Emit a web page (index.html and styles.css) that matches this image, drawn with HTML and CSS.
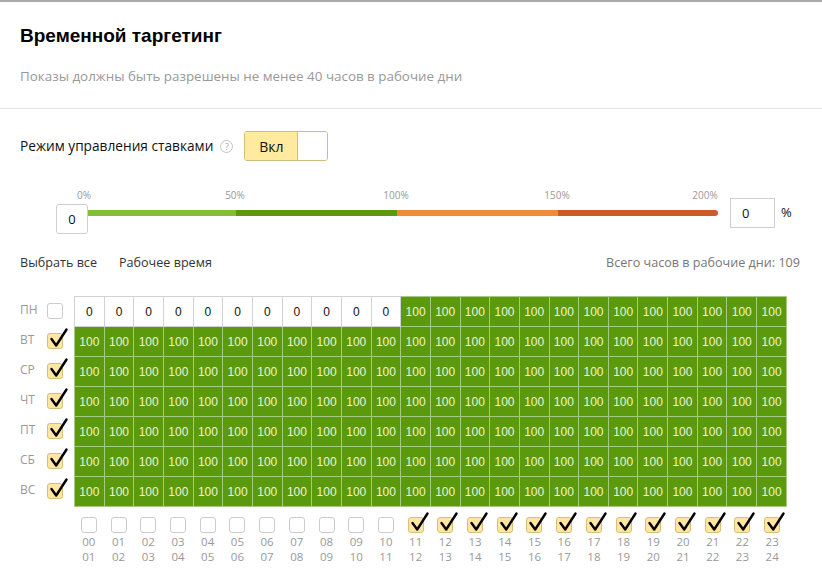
FILE: index.html
```html
<!DOCTYPE html>
<html lang="ru">
<head>
<meta charset="utf-8">
<title>Временной таргетинг</title>
<link rel="stylesheet" href="styles.css">
</head>
<body>
<svg width="0" height="0" class="defs" aria-hidden="true">
  <symbol id="chk" viewBox="0 0 22 22">
    <path d="M4.5 12 L9.2 18.5 L19.5 2.5" fill="none" stroke="#000" stroke-width="2.4" stroke-linecap="round" stroke-linejoin="round"/>
  </symbol>
</svg>
<div class="topbar"></div>
<header class="header">
  <h1 class="title">Временной таргетинг</h1>
  <p class="subtitle">Показы должны быть разрешены не менее 40 часов в рабочие дни</p>
</header>
<div class="divider"></div>
<section class="content">
  <div class="mode-row">
    <span class="mode-label">Режим управления ставками</span>
    <span class="help">?</span>
    <div class="toggle"><span class="toggle-on">Вкл</span><span class="toggle-off"></span></div>
  </div>

  <div class="slider-row">
    <div class="inp inp-left">0</div>
    <div class="scale">
      <div class="ticks">
        <span class="tick" style="left:-4px">0%</span>
        <span class="tick" style="left:147px">50%</span>
        <span class="tick" style="left:308px">100%</span>
        <span class="tick" style="left:469px">150%</span>
        <span class="tick" style="left:617px">200%</span>
      </div>
      <div class="bar">
        <span class="seg seg1"></span><span class="seg seg2"></span><span class="seg seg3"></span><span class="seg seg4"></span>
      </div>
    </div>
    <div class="inp inp-right">0</div>
    <span class="pct">%</span>
  </div>

  <div class="links-row">
    <span class="link">Выбрать все</span>
    <span class="link">Рабочее время</span>
    <span class="total">Всего часов в рабочие дни: 109</span>
  </div>

  <div class="grid-wrap">
    <div class="days">
      <div class="day"><span class="dname">ПН</span><span class="cb"></span></div>
      <div class="day"><span class="dname">ВТ</span><span class="cb on"><svg class="mark"><use href="#chk"/></svg></span></div>
      <div class="day"><span class="dname">СР</span><span class="cb on"><svg class="mark"><use href="#chk"/></svg></span></div>
      <div class="day"><span class="dname">ЧТ</span><span class="cb on"><svg class="mark"><use href="#chk"/></svg></span></div>
      <div class="day"><span class="dname">ПТ</span><span class="cb on"><svg class="mark"><use href="#chk"/></svg></span></div>
      <div class="day"><span class="dname">СБ</span><span class="cb on"><svg class="mark"><use href="#chk"/></svg></span></div>
      <div class="day"><span class="dname">ВС</span><span class="cb on"><svg class="mark"><use href="#chk"/></svg></span></div>
    </div>
    <table class="hours">
      <tbody id="tbody"></tbody>
    </table>
  </div>

  <div class="hour-checks" id="hourchecks"></div>
</section>
<script src="script.js"></script>
</body>
</html>
```

FILE: script.js
```js
(function () {
  var tbody = document.getElementById('tbody');
  var html = '';
  for (var r = 0; r < 7; r++) {
    html += '<tr>';
    for (var c = 0; c < 24; c++) {
      if (r === 0 && c < 11) {
        html += '<td class="c0">0</td>';
      } else {
        html += '<td class="c100">100</td>';
      }
    }
    html += '</tr>';
  }
  tbody.innerHTML = html;

  var hc = document.getElementById('hourchecks');
  var h = '';
  function pad(n) { return (n < 10 ? '0' : '') + n; }
  for (var i = 0; i < 24; i++) {
    var on = i >= 11;
    h += '<div class="hc">' +
      '<span class="cb' + (on ? ' on' : '') + '">' + (on ? '<svg class="mark"><use href="#chk"/></svg>' : '') + '</span>' +
      '<span class="hl">' + pad(i) + '</span>' +
      '<span class="hl">' + pad(i + 1) + '</span>' +
      '</div>';
  }
  hc.innerHTML = h;
})();
```

FILE: styles.css
```css
* { box-sizing: border-box; }
html, body { margin: 0; padding: 0; background: #fff; }
body {
  width: 822px;
  font-family: "Open Sans", "Noto Sans", sans-serif;
  color: #000;
}
.defs { position: absolute; }
.topbar { height: 2px; background: #a9a9a9; }
.header { padding: 22px 20px 23px; }
.title {
  margin: 0;
  font-family: "Liberation Sans", Arial, sans-serif;
  font-weight: 700;
  font-size: 19px;
  line-height: 24px;
  color: #000;
}
.subtitle {
  margin: 19px 0 0;
  font-size: 13.4px;
  line-height: 18px;
  color: #999;
}
.divider { height: 1px; background: #e5e5e5; }
.content { padding: 0 20px; }

.mode-row {
  margin-top: 22px;
  height: 30px;
  display: flex;
  align-items: center;
}
.mode-label { font-size: 13.7px; line-height: 18px; color: #111; }
.help {
  margin-left: 7px;
  width: 13px; height: 13px;
  border: 1px solid #c4c4c4;
  border-radius: 50%;
  font-size: 9px; line-height: 11px;
  text-align: center;
  color: #aaa;
}
.toggle {
  margin-left: 11px;
  width: 84px; height: 30px;
  display: flex;
  border: 1px solid #cdbd83;
  border-radius: 3px;
  overflow: hidden;
}
.toggle-on {
  width: 53px;
  background: #ffeaa0;
  border-right: 1px solid #cdbd83;
  display: flex; align-items: center; justify-content: center;
  font-size: 14px; color: #111;
}
.toggle-off { flex: 1; background: #fff; }

.slider-row {
  margin-top: 27px;
  padding-left: 36px;
  display: flex;
  align-items: flex-start;
}
.inp {
  height: 30px;
  border: 1px solid #cfcfcf;
  border-radius: 3px;
  font-size: 13px;
  display: flex; align-items: center;
  color: #111;
}
.inp-left { width: 32px; margin-top: 16px; justify-content: center; }
.inp-right { width: 45px; margin-top: 10px; margin-left: 12px; padding-left: 11px; border-radius: 0; }
.pct { margin-left: 6px; margin-top: 15px; font-size: 13px; color: #111; }
.scale { width: 630px; }
.ticks { position: relative; height: 12px; }
.tick {
  position: absolute; top: 1px;
  transform: translateX(-50%);
  font-size: 10px; line-height: 12px;
  color: #999;
}
.bar {
  margin-top: 10px;
  height: 6px;
  display: flex;
  border-radius: 0 3px 3px 0;
  overflow: hidden;
}
.seg { height: 100%; }
.seg1 { width: 148px; background: #80c034; }
.seg2 { width: 161px; background: #5b9a0d; }
.seg3 { width: 161px; background: #ef8c3a; }
.seg4 { flex: 1; background: #cd5a2b; }

.links-row {
  margin-top: 20px;
  display: flex;
  align-items: center;
  font-size: 12.6px;
  line-height: 18px;
}
.link { color: #333; margin-right: 22px; }
.total { margin-left: auto; margin-right: 2px; color: #777; }

.grid-wrap {
  margin-top: 24px;
  display: flex;
}
.days { width: 54px; }
.day {
  height: 30px;
  display: flex;
  align-items: center;
}
.dname {
  width: 27px;
  font-size: 12px;
  color: #999;
  line-height: 16px;
  margin-top: -2px;
}
.cb {
  position: relative;
  width: 16px; height: 16px;
  border: 1px solid #cbcbcb;
  border-radius: 3px;
  background: #fff;
  flex: none;
}
.cb.on { background: #ffe7a3; border-color: #d8bf78; }
.mark {
  position: absolute;
  left: -1px; top: -7px;
  width: 22px; height: 22px;
}
.hours {
  width: 713px;
  height: 210px;
  table-layout: fixed;
  border-collapse: collapse;
  font-family: "Liberation Sans", Arial, sans-serif;
  font-size: 12px;
}
.hours td {
  height: 30px;
  padding: 0;
  text-align: center;
}
.c0 { border: 1px solid #d2d2d2; background: #fff; color: #111; }
.c100 { border: 1px solid #a6ca80; background: #5b9a0d; color: #eef6d4; }

.hour-checks {
  margin-left: 54px;
  width: 713px;
  margin-top: 10px;
  display: grid;
  grid-template-columns: repeat(24, 1fr);
}
.hc {
  display: flex;
  flex-direction: column;
  align-items: center;
}
.hl {
  display: block;
  font-size: 11.5px;
  line-height: 15px;
  height: 15px;
  color: #999;
  text-align: center;
}
.hc .cb { margin-bottom: 1px; }
```
